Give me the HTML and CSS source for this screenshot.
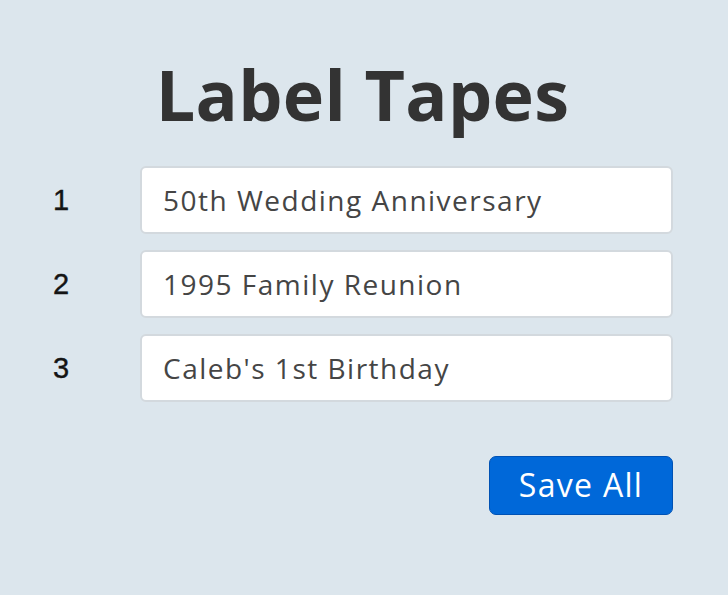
FILE: index.html
```html
<!DOCTYPE html>
<html lang="en">
<head>
<meta charset="utf-8">
<title>Label Tapes</title>
<link rel="stylesheet" href="styles.css">
</head>
<body>
<main class="page">
  <h1 class="title">Label Tapes</h1>
  <div class="list">
    <div class="row"><span class="num">1</span><div class="field">50th Wedding Anniversary</div></div>
    <div class="row"><span class="num">2</span><div class="field">1995 Family Reunion</div></div>
    <div class="row"><span class="num">3</span><div class="field">Caleb's 1st Birthday</div></div>
  </div>
  <div class="actions">
    <button class="save" type="button">Save All</button>
  </div>
</main>
</body>
</html>
```
FILE: styles.css
```css
html, body {
  margin: 0;
  padding: 0;
  background: #dce6ed;
  height: 100%;
}
.page {
  width: 621px;
  margin-left: 52px;
  padding-top: 50px;
  font-family: "Open Sans", "Noto Sans", sans-serif;
}
.title {
  margin: 0 0 28px 0;
  text-align: center;
  font-size: 70px;
  line-height: 88px;
  font-weight: 700;
  color: #333333;
  letter-spacing: 0.3px;
}
.list {
  display: flex;
  flex-direction: column;
  gap: 16px;
}
.row {
  display: flex;
  align-items: center;
}
.num {
  width: 88px;
  padding-left: 1px;
  box-sizing: border-box;
  font-family: "Liberation Sans", Arial, sans-serif;
  font-size: 29px;
  font-weight: 500;
  color: #141414;
  -webkit-text-stroke: 0.4px #141414;
}
.field {
  flex: 1;
  box-sizing: border-box;
  height: 68px;
  display: flex;
  align-items: center;
  padding: 0 0 0 21px;
  background: #ffffff;
  border: 2px solid #d3d9de;
  border-radius: 6px;
  font-size: 28px;
  letter-spacing: 1.5px;
  color: #454545;
}
.actions {
  display: flex;
  justify-content: flex-end;
  margin-top: 54px;
}
.save {
  width: 184px;
  height: 59px;
  background: #0068d9;
  border: 1px solid #0052b4;
  border-radius: 7px;
  color: #ffffff;
  font-family: "Open Sans", "Noto Sans", sans-serif;
  font-size: 32px;
  font-weight: 500;
  letter-spacing: 1.3px;
  padding: 0 0 2px 0;
}
```
